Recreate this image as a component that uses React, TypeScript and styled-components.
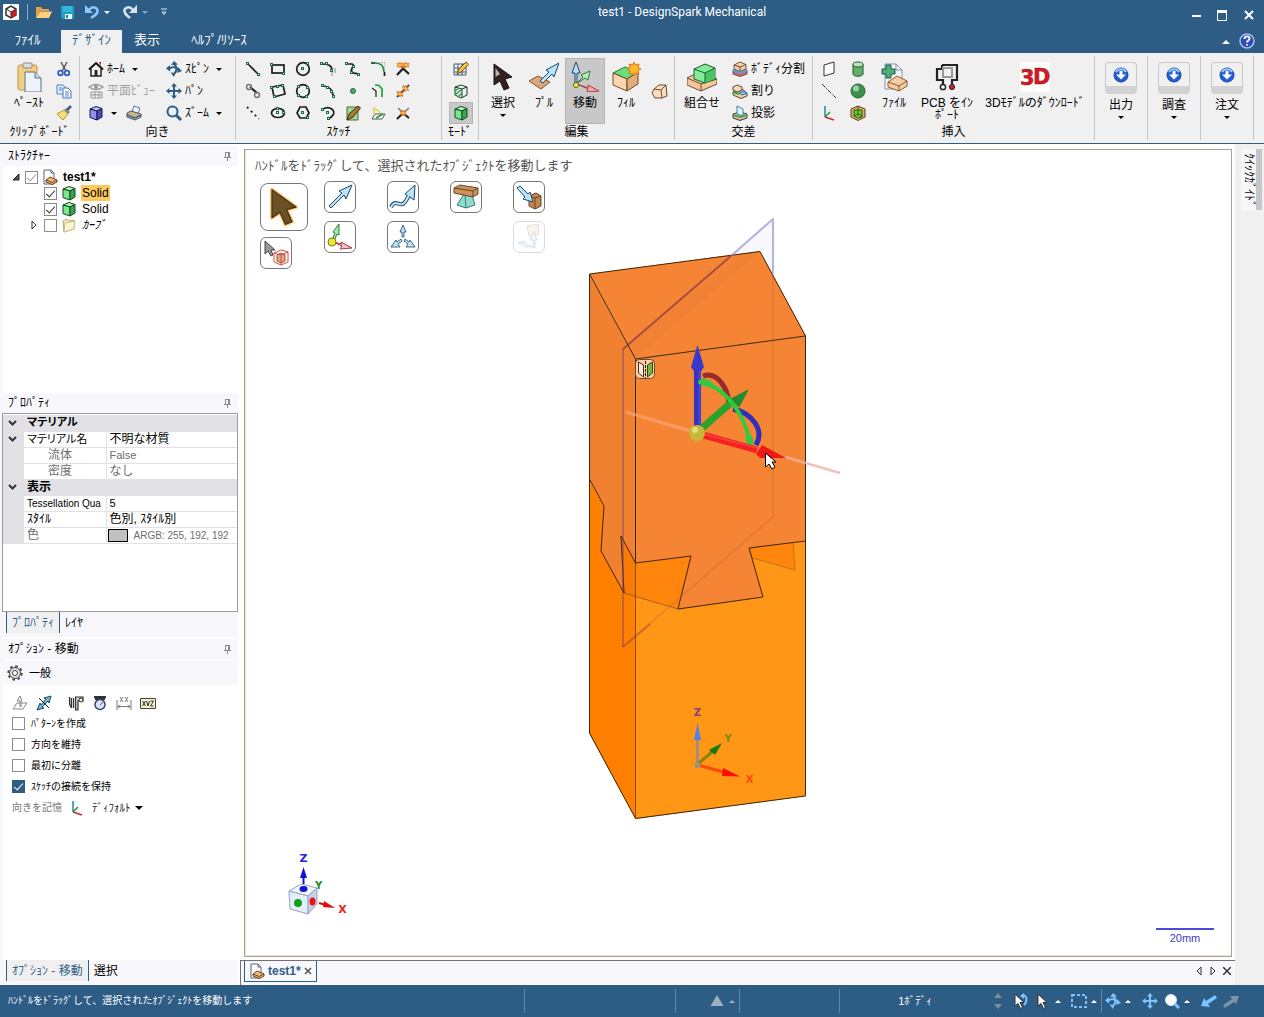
import React from "react";
import styled, { createGlobalStyle, css } from "styled-components";

const c = {
  blue: "#2d5c85",
  ribbon: "#f0f0f0",
  panel: "#f8f8fc",
  line: "#c6c6c6",
  green: "#176b45",
  ink: "#1c1c1c",
  sky: "#7cc4ff",
};

const Global = createGlobalStyle`
  * { box-sizing: border-box; }
  body {
    margin: 0;
    font-family: "Liberation Sans", "Noto Sans CJK JP", sans-serif;
    font-size: 12px;
    line-height: 16px;
    color: #000;
    background: ${c.panel};
  }
  button, select, input { font: inherit; color: inherit; margin: 0; }
  svg { display: block; flex: none; }
`;

/* ---------- frame ---------- */
const App_ = styled.div`
  min-height: 100vh;
  display: flex;
  flex-direction: column;
`;
const Plain = styled.button`
  border: 0;
  padding: 0;
  background: none;
  display: flex;
  align-items: center;
  justify-content: center;
`;
const TitleBar = styled.header`
  height: 24px;
  background: ${c.blue};
  color: #fff;
  display: flex;
  align-items: center;
  padding: 0 8px 0 3px;
`;
const Quick = styled.div`
  flex: 1;
  display: flex;
  align-items: center;
  gap: 8px;
`;
const Rule = styled.span`
  width: 1px;
  height: 16px;
  background: #93abc1;
`;
const Title = styled.h1`
  margin: 0;
  padding-left: 105px;
  font: 400 12px/16px Roboto, "Noto Sans CJK JP", sans-serif;
`;
const WindowButtons = styled.div`
  flex: 1;
  display: flex;
  justify-content: flex-end;
  gap: 12px;
  padding-top: 5px;
`;
const TabBar = styled.nav`
  height: 29px;
  padding: 6px 6px 0 0;
  background: ${c.blue};
  color: #fff;
  display: flex;
  align-items: stretch;
`;
const Tab = styled.button<{ $w: number; $on?: boolean }>`
  width: ${(p) => p.$w}px;
  border: 0;
  padding: 0 0 3px;
  font-size: 13px;
  background: ${(p) => (p.$on ? c.ribbon : "none")};
  color: ${(p) => (p.$on ? c.blue : "#fff")};
`;
const Push = styled.span`
  flex: 1;
`;

/* ---------- ribbon ---------- */
const Ribbon = styled.section`
  background: ${c.ribbon};
  border-bottom: 1px solid ${c.blue};
  display: flex;
  padding: 3px 0;
  height: 91px;
`;
const Group = styled.div<{ $w: number }>`
  width: ${(p) => p.$w}px;
  flex: none;
  border-right: 1px solid ${c.line};
  display: flex;
  flex-direction: column;
  padding-top: 2px;
`;
const GroupBody = styled.div<{ $pad?: number; $gap?: number }>`
  height: 66px;
  display: flex;
  padding-left: ${(p) => p.$pad ?? 0}px;
  gap: ${(p) => p.$gap ?? 0}px;
`;
const Caption = styled.div`
  text-align: center;
  white-space: nowrap;
  line-height: 16px;
`;
const Big = styled(Plain)<{ $w?: number; $on?: boolean }>`
  width: ${(p) => p.$w ?? 40}px;
  flex: none;
  flex-direction: column;
  justify-content: flex-start;
  padding-top: 4px;
  gap: 5px;
  line-height: 12px;
  white-space: nowrap;
  ${(p) =>
    p.$on &&
    css`
      background: #c8c8c8;
      box-shadow: inset 0 0 0 1px #b4b4b4;
    `}
`;
const Stack = styled.div`
  display: flex;
  flex-direction: column;
`;
const Row = styled(Plain)<{ $off?: boolean }>`
  height: 22px;
  justify-content: flex-start;
  gap: 3px;
  white-space: nowrap;
  color: ${(p) => (p.$off ? "#a0a0a0" : "#000")};
`;
const Pair = styled.div`
  display: flex;
  gap: 5px;
`;
const IconGrid = styled.div<{ $cols: number; $cell: number }>`
  display: grid;
  grid-template-columns: repeat(${(p) => p.$cols}, ${(p) => p.$cell}px);
  grid-auto-rows: 22px;
`;
const Cell = styled(Plain)<{ $on?: boolean }>`
  ${(p) =>
    p.$on &&
    css`
      background: #c8c8c8;
      box-shadow: inset 0 0 0 1px #b4b4b4;
    `}
`;
const Caret = styled.i<{ $up?: boolean; $color?: string; $size?: number }>`
  width: 0;
  height: 0;
  flex: none;
  margin: 0 4px;
  border: ${(p) => p.$size ?? 3}px solid transparent;
  border-${(p) => (p.$up ? "top" : "bottom")}-width: 0;
  border-${(p) => (p.$up ? "bottom" : "top")}-color: ${(p) => p.$color ?? "#000"};
`;
const DropTile = styled.span`
  width: 32px;
  height: 32px;
  border: 1px solid #c9c9c9;
  border-bottom: 8px solid #d2d2d2;
  border-radius: 4px;
  display: flex;
  justify-content: center;
  align-items: center;
`;

/* ---------- left dock ---------- */
const Work = styled.main`
  flex: 1;
  display: flex;
  background: #fff;
`;
const Dock = styled.aside`
  width: 240px;
  flex: none;
  display: flex;
  flex-direction: column;
  background: #fff;
  border-left: 3px solid ${c.panel};
  padding: 2px 2px 0 0;
`;
const Head = styled.h2`
  margin: 0;
  height: 20px;
  padding: 0 6px 0 5px;
  background: ${c.panel};
  font: inherit;
  display: flex;
  align-items: center;
  justify-content: space-between;
`;
const Tree = styled.div`
  height: 227px;
  padding-top: 3px;
`;
const Node = styled.label<{ $indent: number; $strong?: boolean; $italic?: boolean }>`
  height: 16px;
  padding-left: ${(p) => p.$indent}px;
  display: flex;
  align-items: center;
  gap: 4px;
  font-weight: ${(p) => (p.$strong ? 700 : 400)};
  font-style: ${(p) => (p.$italic ? "italic" : "normal")};
`;
const Name = styled.span<{ $hot?: boolean }>`
  padding: 0 1px;
  line-height: 16px;
  background: ${(p) => (p.$hot ? "#ffc959" : "none")};
`;
const Check = styled.input<{ $soft?: boolean; $fill?: boolean }>`
  appearance: none;
  width: 13px;
  height: 13px;
  flex: none;
  border: 1px solid #8c8c8c;
  background: #fff;
  display: flex;
  justify-content: center;
  &:checked {
    background: ${(p) => (p.$fill ? c.blue : "#fff")};
    border-color: ${(p) => (p.$fill ? c.blue : "#8c8c8c")};
  }
  &:checked::before {
    content: "";
    width: 4px;
    height: 8px;
    border: solid ${(p) => (p.$fill ? "#fff" : p.$soft ? "#a0a0a0" : "#333")};
    border-width: 0 1px 1px 0;
    transform: rotate(42deg);
  }
`;
const PropBox = styled.div`
  height: 199px;
  margin-left: -1px;
  border: 1px solid #9c9c9c;
  padding-top: 1px;
  overflow: hidden;
`;
const PropTable = styled.table`
  width: 100%;
  table-layout: fixed;
  border-collapse: collapse;
  td, th {
    height: 16px;
    padding: 0 0 0 3px;
    line-height: 15px;
    border-bottom: 1px solid #e1e1e6;
    text-align: left;
    white-space: nowrap;
    overflow: hidden;
  }
  th { font-weight: 400; border-right: 1px solid #e1e1e6; }
  td:first-child { background: #e1e1e6; }
`;
const Section = styled.tr`
  th {
    background: #e1e1e6;
    font-weight: 700;
  }
`;
const Line = styled.tr<{ $off?: boolean; $nested?: boolean }>`
  color: ${(p) => (p.$off ? "#6d6d6d" : "#000")};
  && th { padding-left: ${(p) => (p.$nested ? 24 : 3)}px; }
`;
const Wide = styled.span`
  font-size: 11px;
  font-feature-settings: "palt";
`;
const Small = styled.span`
  font-size: 11px;
`;
const Tiny = styled.span`
  font-size: 10px;
`;
const Swatch = styled.span`
  display: inline-block;
  vertical-align: top;
  width: 20px;
  height: 13px;
  margin: 1px 6px 0 -2px;
  border: 1px solid #000;
  background: #c0c0c0;
`;
const DockTabs = styled.div`
  height: 25px;
  display: flex;
  align-items: flex-start;
  background: ${c.panel};
  padding-left: 3px;
  & + ${Head} { margin-top: 2px; }
`;
const DockTab = styled.button<{ $on?: boolean }>`
  height: 21px;
  padding: 0 5px;
  border: solid ${c.blue};
  border-width: ${(p) => (p.$on ? "0 1px" : "0")};
  background: ${(p) => (p.$on ? c.ribbon : "none")};
  color: ${(p) => (p.$on ? c.blue : "#000")};
`;
const General = styled.div`
  height: 25px;
  margin-top: 1px;
  padding-left: 4px;
  background: ${c.panel};
  display: flex;
  align-items: center;
  gap: 6px;
  font-size: 11px;
`;
const Options = styled.div`
  flex: 1;
  padding: 8px 0 0 9px;
  font-size: 10px;
`;
const OptionIcons = styled.div`
  display: flex;
  height: 20px;
  align-items: center;
  gap: 16px;
`;
const IconRun = styled.div`
  display: flex;
  gap: 8px;
`;
const Option = styled.label`
  height: 21px;
  display: flex;
  align-items: center;
  gap: 6px;
`;
const Memory = styled.label`
  height: 22px;
  display: flex;
  align-items: center;
  gap: 7px;
  color: #777;
`;
const Picker = styled.span`
  display: flex;
  align-items: center;
  select {
    appearance: none;
    border: 0;
    padding: 0;
    background: none;
    color: #222;
    font-size: 11px;
  }
`;

/* ---------- canvas ---------- */
const Center = styled.div`
  flex: 1;
  min-width: 0;
  display: flex;
  flex-direction: column;
`;
const Canvas = styled.div`
  flex: 1;
  margin: 5px 3px 3px 4px;
  border: 1px solid #a7a38f;
  box-shadow: inset 1px -1px 0 #ece5cf;
  position: relative;
  min-height: 600px;
`;
const SceneSvg = styled.svg`
  position: absolute;
  inset: 0;
  width: 100%;
  height: 100%;
`;
const Hint = styled.p`
  margin: 0;
  padding: 7px 0 0 10px;
  font-size: 13px;
  line-height: 18px;
  color: #555;
`;
const Guides = styled.div`
  position: relative;
  display: flex;
  padding: 6px 0 0 15px;
  gap: 16px;
`;
const GuideCol = styled.div`
  display: flex;
  flex-direction: column;
  gap: 6px;
  padding-top: 2px;
`;
const GuideGrid = styled.div`
  display: grid;
  grid-template-columns: repeat(4, 32px);
  grid-template-rows: 32px 32px;
  gap: 8px 31px;
`;
const Guide = styled(Plain)<{ $big?: boolean; $off?: boolean; $row?: number; $col?: number }>`
  width: ${(p) => (p.$big ? 48 : 32)}px;
  height: ${(p) => (p.$big ? 48 : 32)}px;
  border: 1px solid #777;
  border-radius: ${(p) => (p.$big ? 8 : 6)}px;
  background: #fff;
  opacity: ${(p) => (p.$off ? 0.25 : 1)};
  grid-row: ${(p) => p.$row ?? "auto"};
  grid-column: ${(p) => p.$col ?? "auto"};
`;
const DocTabs = styled.div`
  height: 25px;
  background: ${c.panel};
  border-top: 1px solid #6f7078;
  border-left: 1px solid #6f7078;
  display: flex;
  align-items: flex-start;
  padding: 0 4px 0 3px;
`;
const DocTab = styled(Plain)`
  height: 21px;
  padding: 0 4px;
  gap: 3px;
  border: 1px solid ${c.blue};
  border-top: 0;
  font-weight: 700;
  color: ${c.blue};
`;
const DocNav = styled.div`
  margin-left: auto;
  height: 20px;
  display: flex;
  align-items: center;
  gap: 6px;
`;
const Rail = styled.aside`
  width: 29px;
  flex: none;
  background: #f0f0f0;
  display: flex;
  align-items: flex-start;
  justify-content: flex-end;
  padding: 5px 2px 0 0;
`;
const RailTab = styled.button`
  border: 0;
  border-right: 6px solid #c6c6c6;
  padding: 4px 0 4px 1px;
  height: 61px;
  background: ${c.panel};
  writing-mode: vertical-rl;
  text-orientation: sideways;
  line-height: 14px;
  white-space: nowrap;
`;

/* ---------- status ---------- */
const Status = styled.footer`
  height: 32px;
  background: ${c.blue};
  color: #fff;
  display: flex;
  align-items: center;
  padding-left: 8px;
  font-size: 10px;
`;
const Message = styled.span`
  flex: 1;
`;
const Slot = styled.div<{ $w: number }>`
  width: ${(p) => p.$w}px;
  height: 24px;
  flex: none;
  border-left: 1px solid #6286a6;
  display: flex;
  align-items: center;
  justify-content: flex-end;
`;
const Count = styled.span`
  width: 150px;
  text-align: center;
  font-size: 11px;
`;
const StatusTools = styled.div<{ $w: number }>`
  width: ${(p) => p.$w}px;
  display: flex;
  align-items: center;
  justify-content: space-between;
`;
const ViewTools = styled(StatusTools)`
  margin-right: 25px;
`;

/* ---------- drawings ---------- */
type IcoProps = { s?: number; v?: number; children: React.ReactNode };
const Ico = ({ s = 16, v = 16, children }: IcoProps) => (
  <svg width={s} height={s} viewBox={`0 0 ${v} ${v}`} fill="none" aria-hidden="true">
    {children}
  </svg>
);

const Cube = ({ s = 16, a, b, d, k }: { s?: number; a: string; b: string; d: string; k: string }) => (
  <Ico s={s}>
    <g stroke={k} strokeLinejoin="round">
      <path d="M2 4 8 1.500 14 3.500 9 6Z" fill={a} />
      <path d="M2 4 9 6V15L2 12.500Z" fill={b} />
      <path d="M9 6 14 3.500V12L9 15Z" fill={d} />
    </g>
  </Ico>
);
const GreenCube = ({ s = 16 }: { s?: number }) => <Cube s={s} a="#b9f5b9" b="#7be68c" d="#3fa353" k="#0c4a1e" />;

const Dots = ({ p }: { p: number[][] }) => (
  <>
    {p.map(([x, y]) => (
      <rect key={`${x}-${y}`} x={x - 0.5} y={y - 0.5} width="2" height="2" fill="#e4f7ec" stroke={c.green} />
    ))}
  </>
);
const K = { stroke: c.ink, strokeWidth: 1.7 };

const sparks = (x: number, y: number) => (
  <path
    d={`M${x} ${y - 3}l1 2 2-1-1 2 1 2-2-1-1 2-1-2-2 1 1-2-1-2 2 1Z`}
    fill="#ffc23b"
    stroke="#e0601c"
    strokeWidth=".7"
  />
);

const sketchIcons: [string, React.ReactNode][] = [
  ["線", <><path d="M3 3 13 13" {...K} /><Dots p={[[2, 2], [13, 13]]} /></>],
  ["四角形", <><rect x="2" y="4" width="12" height="8" {...K} /><Dots p={[[1, 3], [13, 12]]} /></>],
  ["円", <><circle cx="8" cy="8" r="6.300" {...K} /><Dots p={[[7, 7], [12, 2]]} /></>],
  ["接円弧", <><path d="M2 3C9 3 12 5 12 9" {...K} /><path d="M12 9v6M15 7v5" stroke="#888" /><Dots p={[[1, 2], [6, 2], [11, 9]]} /></>],
  ["スプライン", <><path d="M2 3H7C11 4 4 9 7 11 8 13 11 12 13 13" {...K} /><Dots p={[[1, 2], [8, 5], [6, 11], [13, 13]]} /></>],
  ["コーナー", <><path d="M1 2H5M14.500 11V15" {...K} /><path d="M5 2C11 2 14 5 14 11" stroke="#1e8f3e" strokeWidth="1.700" /><path d="M11 1.500h4v4" stroke="#cf9b8c" strokeDasharray="2 1" /></>],
  ["トリム", <><path d="M2 14 8 7.500 14 13" {...K} strokeWidth="2.200" /><path d="M8 7 12 3M8 7 4 3" stroke="#c0501c" strokeWidth="1.500" />{sparks(5, 4)}{sparks(11, 4)}</>],
  ["接線", <><path d="M5 4 12 10" {...K} strokeWidth="2" /><circle cx="4" cy="4" r="2.500" stroke="#777" strokeWidth="1.500" /><circle cx="12" cy="12" r="2.500" stroke="#777" strokeWidth="1.500" /></>],
  ["三点四角形", <><path d="M2 4 13 2 15 11 4 14Z" {...K} /><Dots p={[[1, 4], [12, 2], [4, 13], [7, 3]]} /></>],
  ["三点円", <><circle cx="8" cy="8" r="6.300" {...K} /><Dots p={[[3, 3], [12, 4], [3, 12], [11, 13]]} /></>],
  ["円弧", <><path d="M2 3C9 3 13 7 13 13" {...K} /><Dots p={[[2, 2], [7, 4], [11, 8], [13, 13]]} /></>],
  ["点", <circle cx="8" cy="8" r="2.500" fill="#4fae66" stroke={c.green} />],
  ["オフセット", <><path d="M2 5 6 8V14" {...K} strokeWidth="1.200" /><path d="M5 2 9 2.500 12 6V14" stroke="#1e9f3e" strokeWidth="1.700" /></>],
  ["分割", <><path d="M2 14 14 2" {...K} /><path d="M2 8 8 14M8 2 14 8" stroke="#888" />{sparks(5, 11)}{sparks(10.5, 5.5)}</>],
  ["構築線", <path d="M2 2 14 14" {...K} strokeDasharray="2 3.500" />],
  ["楕円", <><ellipse cx="8" cy="8" rx="6.500" ry="4.500" {...K} /><Dots p={[[7, 7], [7, 3], [13, 7]]} /></>],
  ["多角形", <><path d="M5 2H11L14 8 11 13H5L2 8Z" {...K} /><Dots p={[[7, 7], [12, 12]]} /></>],
  ["スイープ円弧", <><path d="M3 4C10 0 16 6 13 10 12 12 10 13 8 14" {...K} /><Dots p={[[2, 4], [7, 7], [8, 13]]} /></>],
  ["面に投影", <><path d="M2 2H13V15H2Z" fill="#a9d694" stroke="#4b6a3c" /><path d="M2 15 4 9 13 1 15.500 3 8 12Z" fill="#a47b33" stroke="#3c2a10" /></>],
  ["投影", <><path d="M2 14 5 9H15L12 14Z" fill="#fff" stroke="#555" /><path d="M6 13 13 9" stroke="#27a043" strokeWidth="2" /><path d="M4 10V3L11 8" stroke="#e3d24c" strokeWidth="1.500" /></>],
  ["交差", <><path d="M2 14 8 8 14 13" {...K} strokeWidth="2" /><path d="M3 3 8 8 14 3" stroke="#777" strokeWidth="1.500" />{sparks(8, 8)}</>],
];

const axes = (
  <>
    <path d="M4 1V12" stroke="#2a8fb2" strokeWidth="1.600" />
    <path d="M4 12 9 7" stroke="#2b9b45" strokeWidth="1.600" />
    <path d="M4 12 13 15" stroke="#bd3030" strokeWidth="1.600" />
  </>
);
const moveArrows = (color: string) => (
  <path
    d="M8 0l3 3.500H9V7h3.500V5L16 8l-3.500 3V9H9v3.500h2L8 16l-3-3.500h2V9H3.500v2L0 8l3.500-3v2H7V3.500H5Z"
    fill={color}
  />
);
const spinArrows = (color: string) => (
  <>
    <path d="M8 2.500C11 6 11 10 8 13" stroke={color} strokeWidth="2" />
    <path d="M3 8C6 5 10 6 13 9" stroke={color} strokeWidth="2" />
    <path d="M5 4 8 0 12 3.500ZM4.500 11.500 9.500 12 8 16ZM0 7.500 4 4V10.500ZM12 6 16 10 11 12Z" fill={color} />
  </>
);
const pointer = (fill: string, stroke: string) => (
  <path d="M3 1V13L6 10.500 8.500 15.500 10.500 14.500 8 9.500H12Z" fill={fill} stroke={stroke} strokeLinejoin="round" />
);
const bigPointer = "M6 2V23L12 19 16 28 21 26 17 17 24 15Z";
const Pin = () => (
  <Ico s={9} v={9}>
    <path d="M2 .5H7M2.500 0V5M6.500 0V5M5.500 0V5M1 5.500H8M4.500 5V9" stroke="#8a8a92" />
  </Ico>
);
const docIcon = (
  <>
    <path d="M2 1H9L12 4V15H2Z" fill="#fff" stroke="#56657e" />
    <path d="M9 1V4H12" stroke="#56657e" />
    <path d="M4 11 8 8 15 11V13L10 15.500 4 13Z" fill="#f0b97c" stroke="#70451f" />
    <path d="M4 11 10 13.500 15 11" stroke="#70451f" />
  </>
);
const blocks = (top: string, bottom: string) => (
  <g strokeLinejoin="round" strokeWidth=".9">
    <path d="M1 9 8 7 15 9V13L8 15.500 1 13Z" fill={bottom} stroke="#5d4637" />
    <path d="M2 4 8 1 14 3.500V8L8 10.500 2 8Z" fill={top} stroke="#5d4637" />
    <path d="M2 4 8 6 14 3.500M8 6V10" stroke="#5d4637" />
  </g>
);
const blueArrow = "#b7e4f7";
const arrowHead = "#23456a";

const DownIcon = () => (
  <Ico s={16}>
    <circle cx="8" cy="8" r="7" fill="#1d5fd8" stroke="#1440a0" />
    <path d="M3 5A6 6 0 0 1 13 5" stroke="#9cc8ff" strokeWidth="2" />
    <path d="M6.500 4h3v3.500H13L8 12.500 3 7.500h3.500Z" fill="#fff" />
  </Ico>
);

const Scene = () => (
  <SceneSvg viewBox="245 150 986 806" fill="none" role="img" aria-label="3D モデル">
    <g strokeLinejoin="round">
      <path d="M589 479V733L635 818V563Z" fill="#ff8000" />
      <path d="M635 563 806 541V796L635 819Z" fill="#ff9616" />
      <path d="M635 563 691 556 678 609 635 597Z" fill="#ff850c" />
      <path d="M621 536 635 563V597L624 593Z" fill="#f97a06" />
      <path d="M749 548 793 542 795 570 752 558Z" fill="#ff850c" stroke="#a56a18" strokeWidth=".7" />
      <path d="M589 274 760 251 806 336 635 359Z" fill="#f58535" />
      <path d="M623 349 743 253 760 251 635 359Z" fill="#ee7e36" opacity=".6" />
      <path d="M589 274 635 359V563L621 536 624 593 601 551 604 506 589 479Z" fill="#f08131" />
      <path d="M635 359 806 336V541L749 548 763 597 678 609 691 556 635 563Z" fill="#f58535" />
      <path d="M773 219V273L760 251 729 255Z" fill="#f8f8ff" />
      <path d="M624 593 678 609" stroke="#8a5a20" strokeWidth=".8" />
      <g stroke="#3d2608" strokeWidth="1">
        <path d="M589.500 274 760 251.500 805.500 336 635.500 359Z" />
        <path d="M635.500 359V563L621 536 624 593 601 551 604 506 589.500 479V274" />
        <path d="M805.500 336V541L749 548 763 597 678 609 691 556 635.500 563" />
        <path d="M589.500 479V733L635.500 818.500 805.500 796V541" />
        <path d="M635.500 563V819" stroke="#8f4a08" />
      </g>
      <path d="M623 349V647" stroke="#72367066" strokeWidth="2" />
      <path d="M623 349 731 256" stroke="#70284a99" strokeWidth="2" />
      <path d="M731 256 773 219V273" stroke="#8884c099" strokeWidth="2" />
      <path d="M773 273V517L623 647" stroke="#b0604040" strokeWidth="2" />
      <path d="M623 647 650 624" stroke="#80404066" strokeWidth="2" />
    </g>
    <path d="M626 412 697 433" stroke="#ffab83" strokeWidth="3" opacity=".6" />
    <path d="M785 457 840 473" stroke="#eab4a8" strokeWidth="2.500" opacity=".8" />
    <g>
      <path d="M703 376C717 371 728 388 729 404" stroke="#962c2c" strokeWidth="5" />
      <path d="M733 409C752 413 765 430 756 445" stroke="#3030b8" strokeWidth="5" />
      <path d="M701 429 733 401" stroke="#2ba32b" strokeWidth="7" />
      <path d="M731 399 748 390 739 407Z" fill="#238a2d" stroke="#238a2d" />
      <path d="M697.500 431V366" stroke="#3333c4" strokeWidth="7" />
      <path d="M699.500 431V370" stroke="#5050dc" strokeWidth="1.500" />
      <path d="M691 367 697.500 345 704 367 701 371H694Z" fill="#3838cd" />
      <path d="M700 382C724 386 745 413 750 444" stroke="#2ecb3b" strokeWidth="4" strokeLinecap="round" />
      <path d="M703 382 709 384M749 438 750 442" stroke="#35c843" strokeWidth="7" strokeLinecap="round" />
      <path d="M703 435 757 450" stroke="#f52020" strokeWidth="7" />
      <path d="M704 434 757 448" stroke="#ff4444" strokeWidth="1.500" />
      <path d="M756 454 762 445 786 458 760 458Z" fill="#f01818" />
      <circle cx="697" cy="433" r="8" fill="#c7b83a" />
      <circle cx="695" cy="430" r="3" fill="#e5dc7c" />
    </g>
    <path d="M765.500 453V467L769 464 772 469 775 467 772 462H776Z" fill="#fff" stroke="#000" />
    <rect x="635.500" y="359.500" width="19" height="19" rx="4" fill="#ffcda6" stroke="#6b4a28" />
    <path d="M638.500 362 643.500 365V377L638.500 373Z" fill="#ffe9d5" stroke="#403020" />
    <path d="M652.500 362 647.500 365V377L652.500 373Z" fill="#78b83b" stroke="#304018" />
    <path d="M645.500 361V378" stroke="#222" strokeDasharray="3 1" />

    <path d="M697.500 764V738" stroke="#a58b86" strokeWidth="3" />
    <path d="M694 740 697.500 723 701 740Z" fill="#5580ee" />
    <path d="M698 764 713 751" stroke="#8a8600" strokeWidth="3" />
    <path d="M709 750 722 743 715 755Z" fill="#157a08" />
    <path d="M698 765 723 772" stroke="#ff4a0c" strokeWidth="3" />
    <path d="M723 768 740 776.500 722 776Z" fill="#ff0c00" />
    <circle cx="697.500" cy="765" r="3" fill="#a09080" />
    <g fontFamily="DejaVu Sans, sans-serif" fontWeight="700" fontSize="10" textAnchor="middle">
      <text x="697.500" y="716" fill="#84476b">Z</text>
      <text x="728" y="742" fill="#7f8a08">Y</text>
      <text x="749.500" y="783" fill="#ff4a0c">X</text>
      <text x="303.500" y="862" fontSize="11" fill="#2424e0">Z</text>
      <text x="318.500" y="889" fill="#218a28">Y</text>
      <text x="342.500" y="913" fontSize="11" fill="#f02020">X</text>
    </g>
    <path d="M303.500 884V876" stroke="#1010d8" strokeWidth="2" />
    <path d="M300 878 303.500 867 307 878Z" fill="#1010d8" />
    <path d="M319 903 326 905" stroke="#d01010" strokeWidth="2" />
    <path d="M324 901 335 908 323 907Z" fill="#f00808" />
    <g stroke="#97a5bd" strokeLinejoin="round">
      <path d="M289 891 301 884 317 888 308 896Z" fill="#f0f6ff" />
      <path d="M289 891 308 896V914L290 909Z" fill="#e4eefb" />
      <path d="M308 896 317 888V904L308 914Z" fill="#c3d2ea" />
    </g>
    <ellipse cx="303.500" cy="889" rx="4" ry="3" fill="#1010d8" />
    <circle cx="298" cy="903" r="4" fill="#10a018" />
    <ellipse cx="312.500" cy="901.500" rx="3" ry="4" fill="#f01010" />
    <path d="M1156 929H1214" stroke="#4a4ae0" strokeWidth="2" />
    <text x="1185" y="942" fontFamily="Liberation Sans, sans-serif" fontSize="11" fill="#3c3ccc" textAnchor="middle">
      20mm
    </text>
  </SceneSvg>
);

const Chevron = () => (
  <Ico s={12} v={12}>
    <path d="M3 4 6.500 7.500 10 4" stroke="#333" strokeWidth="2" />
  </Ico>
);

export default function App() {
  return (
    <App_>
      <Global />
      <TitleBar>
        <Quick>
          <Ico>
            <rect width="16" height="16" rx="1" fill="#fff" />
            <path d="M3 5 8 2 13 5V11L8 14 3 11Z" fill="#fff" stroke="#333" strokeWidth="1.500" />
            <path d="M8 8 13 5V11L8 14Z" fill="#d8181f" />
            <path d="M3 5 8 8 13 5M8 8V14" stroke="#333" />
          </Ico>
          <Rule />
          <Plain aria-label="開く">
            <Ico><path d="M0 14V3H5L6.500 5H13V7H4Z" fill="#e8a23c" /><path d="M4 7.500H16L13 14H0Z" fill="#ffce80" /></Ico>
          </Plain>
          <Plain aria-label="保存">
            <Ico><path d="M1 2H14V15H3L1 13Z" fill="#1ba0c8" /><path d="M3 2H12V8H3Z" fill="#35b6d8" /><path d="M5 10H12V15H5Z" fill="#e8f8ff" /><path d="M6 11H8V14H6Z" fill="#1b80a8" /></Ico>
          </Plain>
          <Plain aria-label="元に戻す">
            <Ico><path d="M5 6C9 1 14 4 13.500 7.500 13 11 10 12 7 14" stroke="#8cc8ff" strokeWidth="2.500" /><path d="M1 1V9H9Z" fill="#8cc8ff" /></Ico>
            <Caret $color="#fff" />
          </Plain>
          <Plain aria-label="やり直し">
            <Ico><path d="M11 6C7 1 2 4 2.500 7.500 3 11 6 12 8 14" stroke="#dbe4ec" strokeWidth="2.500" /><path d="M15 1V9H7Z" fill="#dbe4ec" /></Ico>
            <Caret $color="#8fa6bb" />
          </Plain>
          <Plain aria-label="カスタマイズ">
            <Ico s={8} v={8}><path d="M1 1H7M2 4H6L4 6.500Z" stroke="#dfe8f0" /></Ico>
          </Plain>
        </Quick>
        <Title>test1 - DesignSpark Mechanical</Title>
        <WindowButtons>
          <Plain aria-label="最小化"><Ico s={14} v={14}><path d="M2 8H11" stroke="#fff" strokeWidth="2" /></Ico></Plain>
          <Plain aria-label="最大化"><Ico s={14} v={14}><path d="M1.500 3V12.500H10.500V3" stroke="#fff" /><path d="M1 3.500H11" stroke="#fff" strokeWidth="3" /></Ico></Plain>
          <Plain aria-label="閉じる"><Ico s={14} v={14}><path d="M3 3 11 11M11 3 3 11" stroke="#fff" strokeWidth="2" /></Ico></Plain>
        </WindowButtons>
      </TitleBar>
      <TabBar>
        <Tab $w={55}>ﾌｧｲﾙ</Tab>
        <Push style={{ flex: "0 0 6px" }} />
        <Tab $w={61} $on>ﾃﾞｻﾞｲﾝ</Tab>
        <Tab $w={50}>表示</Tab>
        <Tab $w={94}>ﾍﾙﾌﾟ/ﾘｿｰｽ</Tab>
        <Push />
        <Plain aria-label="リボンを隠す"><Caret $up $size={4} $color="#fff" /></Plain>
        <Plain aria-label="ヘルプ">
          <Ico s={24} v={24}>
            <circle cx="13" cy="11" r="7" fill="#2d50b8" stroke="#a9bfe8" strokeWidth="1.500" />
            <path d="M10.500 9C10.500 5.500 15.500 5.500 15.500 8.500 15.500 10.500 13 10.500 13 12.500M13 14V15.500" stroke="#fff" strokeWidth="1.800" />
          </Ico>
        </Plain>
      </TabBar>

      <Ribbon>
        <Group $w={80}>
          <GroupBody $pad={6} $gap={4}>
            <Big $w={46}>
              <Ico s={30} v={30}>
                <rect x="4" y="3" width="19" height="25" rx="2" fill="#f3cf80" stroke="#bf9548" />
                <rect x="9" y="1" width="9" height="5" rx="1" fill="#ddd" stroke="#8a8a8a" />
                <path d="M11 10H21L27 16V30H11Z" fill="#eef4fb" stroke="#60708c" />
                <path d="M21 10V16H27" fill="#c9d8ea" stroke="#60708c" />
              </Ico>
              ﾍﾟｰｽﾄ
            </Big>
            <Stack>
              <Row aria-label="切り取り"><Ico><path d="M5 1 10 10M11 1 6 10" stroke="#555" strokeWidth="1.500" /><circle cx="4.500" cy="12" r="2.300" stroke="#2d5ec0" strokeWidth="1.800" /><circle cx="11" cy="12" r="2.300" stroke="#2d5ec0" strokeWidth="1.800" /></Ico></Row>
              <Row aria-label="コピー"><Ico><path d="M1 2H7L9 4V11H1Z" fill="#e4effd" stroke="#5080c4" /><path d="M7 5H12L15 8V15H7Z" fill="#fff" stroke="#4070b8" /><path d="M9 9H13M9 11H13M9 13H13M3 5H6M3 7H6" stroke="#4c82cc" /></Ico></Row>
              <Row aria-label="書式コピー"><Ico><path d="M1 9 8 5 12 9 7 15Z" fill="#f5de7c" stroke="#b4932f" /><path d="M8 5 12 9 14 7 10 3Z" fill="#8a8a90" /><path d="M11 5 15 1" stroke="#4b5a7c" strokeWidth="2.500" /></Ico></Row>
            </Stack>
          </GroupBody>
          <Caption>ｸﾘｯﾌﾟﾎﾞｰﾄﾞ</Caption>
        </Group>

        <Group $w={156}>
          <GroupBody $pad={8} $gap={11}>
            <Stack>
              <Row><Ico><path d="M3 8V15H13V8" fill="#fff8c8" stroke="#222" strokeWidth="1.500" /><path d="M1 8.500 8 2 15 8.500" stroke="#111" strokeWidth="2" /><path d="M6.500 9H9.500V15H6.500Z" fill="#1b2463" /><path d="M11 1H13V5" fill="#b02020" /></Ico>ﾎｰﾑ<Caret /></Row>
              <Row $off disabled><Ico><path d="M1 4Q8-1 15 4Q8 9 1 4Z" stroke="#999" strokeWidth="1.500" /><circle cx="8" cy="4" r="2" fill="#999" /><path d="M3 9H14V15H3ZM3 12H14M7 9V15M11 9V15" stroke="#999" /></Ico>平面ﾋﾞｭｰ</Row>
              <Pair>
                <Row aria-label="ビュー"><Cube a="#c4c4fb" b="#9090e8" d="#4a4ab8" k="#181850" /><Caret /></Row>
                <Row aria-label="印刷"><Ico><path d="M6 7 8 1 14 3 12 9Z" fill="#e8f4ff" stroke="#4c7cc0" /><path d="M1 8 5 6 15 9V12L9 15 1 12Z" fill="#d7b27c" stroke="#555" /><path d="M1 10 9 13 15 10" stroke="#2870b0" strokeWidth="1.500" /></Ico></Row>
              </Pair>
            </Stack>
            <Stack>
              <Row><Ico>{spinArrows(c.blue)}</Ico>ｽﾋﾟﾝ<Caret /></Row>
              <Row><Ico>{moveArrows(c.blue)}</Ico>ﾊﾟﾝ</Row>
              <Row><Ico><circle cx="6.500" cy="6.500" r="5" fill="#e8f2fb" stroke={c.blue} strokeWidth="2" /><path d="M10 10 15 15" stroke={c.blue} strokeWidth="3" /></Ico>ｽﾞｰﾑ<Caret /></Row>
            </Stack>
          </GroupBody>
          <Caption>向き</Caption>
        </Group>

        <Group $w={206}>
          <GroupBody $pad={4}>
            <IconGrid $cols={7} $cell={25}>
              {sketchIcons.map(([name, art]) => (
                <Cell key={name} aria-label={name}><Ico>{art}</Ico></Cell>
              ))}
            </IconGrid>
          </GroupBody>
          <Caption>ｽｹｯﾁ</Caption>
        </Group>

        <Group $w={37}>
          <GroupBody $pad={7}>
            <IconGrid $cols={1} $cell={24}>
              <Cell aria-label="スケッチモード"><Ico><path d="M1 3H13V14H1ZM5 3V14M9 3V14M1 7H13M1 11H13" stroke="#4a5a78" /><path d="M4 13 6 8 13 1 15.500 3.500 8 11Z" fill="#f2c73c" stroke="#6d4c14" /></Ico></Cell>
              <Cell aria-label="断面モード"><Ico><path d="M2 4 8 2 14 4V12L8 15 2 12ZM2 4 9 6 14 4M9 6V15" stroke="#173f22" /><path d="M2 8 6 5M2 12 9 6M5 14 9 10" stroke="#2d9a48" strokeWidth="1.500" /></Ico></Cell>
              <Cell $on aria-label="3D モード"><GreenCube /></Cell>
            </IconGrid>
          </GroupBody>
          <Caption>ﾓｰﾄﾞ</Caption>
        </Group>

        <Group $w={196}>
          <GroupBody $pad={4} $gap={1}>
            <Big>
              <Ico s={30} v={30}><path d={bigPointer} fill="#33221e" stroke="#1c1210" strokeLinejoin="round" /><path d="M7.500 6V15L12 12Z" fill="#b8b4b2" /></Ico>
              選択
              <Caret />
            </Big>
            <Big>
              <Ico s={30} v={30}>
                <path d="M0 19 9 14 21 20 12 27Z" fill="#dda877" stroke="#80532c" />
                <path d="M11 19 20 10 17 8 30 1 25 15 23 12 14 21Z" fill={blueArrow} stroke={arrowHead} />
              </Ico>
              ﾌﾟﾙ
            </Big>
            <Big $on>
              <Ico s={30} v={30}>
                <path d="M5 22V11H2L6 0 10 11H7V22Z" fill={blueArrow} stroke={arrowHead} />
                <path d="M6 22 13 15 11 13 20 9 18 18 15 16Z" fill="#b2efb8" stroke="#2c7b3c" />
                <path d="M7 22 18 26 18 23 29 29 17 30 18 27Z" fill="#f2aaaa" stroke="#a83c44" />
                <circle cx="6" cy="23" r="2.500" fill="#f2e84c" stroke="#6c6420" />
              </Ico>
              移動
            </Big>
            <Big>
              <Ico s={30} v={30}>
                <path d="M2 11 14 5 27 10 16 17Z" fill="#6fdc7c" stroke="#287038" />
                <path d="M2 11 16 17V29L2 23Z" fill="#fbd5ae" stroke="#6e4a2c" />
                <path d="M16 17 27 10V22L16 29Z" fill="#e5ab78" stroke="#6e4a2c" />
                <path d="M23 0 24.500 3 28 2 27 5.500 30 7 27 8.500 28 12 24.500 11 23 14 21.500 11 18 12 19 8.500 16 7 19 5.500 18 2 21.500 3Z" fill="#ffb52c" stroke="#d97812" />
              </Ico>
              ﾌｨﾙ
            </Big>
            <Cell aria-label="ブレンド"><Ico s={26} v={26}><path d="M7 11 12 7H19L20 18 15 20H8L5 15Z" fill="#fbdcbf" stroke="#6e4a2c" /><path d="M7 11 14 12 19 7M14 12 15 20" stroke="#6e4a2c" /></Ico></Cell>
          </GroupBody>
          <Caption>編集</Caption>
        </Group>

        <Group $w={138}>
          <GroupBody $pad={7} $gap={10}>
            <Big>
              <Ico s={30} v={30}>
                <path d="M0 16 8 12 30 17V22L14 29 0 23Z" fill="#f5c79a" stroke="#6e4a2c" />
                <path d="M0 16 14 22 30 17M14 22V29" stroke="#6e4a2c" />
                <path d="M7 7 18 2 28 6V17L18 21 7 17Z" fill="#84ec98" stroke="#146030" />
                <path d="M18 11 28 6V17L18 21Z" fill="#4cc464" />
                <path d="M7 7 18 11 28 6M18 11V21" stroke="#146030" />
              </Ico>
              組合せ
            </Big>
            <Stack>
              <Row><Ico>{blocks("#f6d0a8", "#d2636b")}<path d="M1 9 8 12 15 9" stroke="#5c9fe0" strokeWidth="2" /></Ico>ﾎﾞﾃﾞｨ分割</Row>
              <Row><Ico><g strokeLinejoin="round"><path d="M1 9 10 6 15 10V13L9 15.500 1 12Z" fill="#f3cb9e" stroke="#5d4637" /><path d="M1 4 5 2 10 4V7L5 9 1 7Z" fill="#f6d8b4" stroke="#5d4637" /><path d="M1 9 7 11" stroke="#2ca83c" strokeWidth="2" /><path d="M7 10 12 8 15 10 10 12Z" fill="#8ac4ee" stroke="#3070a8" /></g></Ico>割り</Row>
              <Row><Ico><g strokeLinejoin="round"><path d="M1 9 8 7 15 9V13L8 15.500 1 13Z" fill="#e2b98c" stroke="#40385c" /><path d="M5 9V1L11 4V11Z" fill="#dff2ff" stroke="#3c7cb4" /><path d="M1 10 8 12 15 10" stroke="#2ca83c" strokeWidth="1.500" /></g></Ico>投影</Row>
            </Stack>
          </GroupBody>
          <Caption>交差</Caption>
        </Group>

        <Group $w={282}>
          <GroupBody $pad={1}>
            <IconGrid $cols={2} $cell={29}>
              <Cell aria-label="平面"><Ico><path d="M3 4 13 1V12L3 15Z" fill="#fff" stroke="#333" /></Ico></Cell>
              <Cell aria-label="円柱"><Ico><path d="M3 3V13C3 16 13 16 13 13V3Z" fill="#62b06c" stroke="#22592c" /><ellipse cx="8" cy="3.500" rx="5" ry="2.500" fill="#b9e5bd" stroke="#22592c" /></Ico></Cell>
              <Cell aria-label="軸"><Ico><path d="M1 1 15 15" stroke="#333" strokeDasharray="5 1 1 1" /></Ico></Cell>
              <Cell aria-label="球"><Ico><circle cx="8" cy="8" r="7" fill="#3f8f4c" stroke="#28632f" /><circle cx="6" cy="5.500" r="3" fill="#9bd4a0" /></Ico></Cell>
              <Cell aria-label="原点"><Ico>{axes}</Ico></Cell>
              <Cell aria-label="シェル"><Ico><path d="M1 4 8 1 15 4V12L8 15.500 1 12Z" fill="#d9ae6c" stroke="#5a3c14" /><path d="M4 5 12 5V12L8 13 4 11Z" fill="#6cc830" stroke="#285a10" /><path d="M8 2V9L4 11M8 9 12 11" stroke="#285a10" /></Ico></Cell>
            </IconGrid>
            <Big $w={44}>
              <Ico s={30} v={30}>
                <path d="M6 2H17L23 8V27H6Z" fill="#f2f6fa" stroke="#8494a8" />
                <path d="M17 2V8H23" stroke="#8494a8" />
                <path d="M7 3H12V7H16V12H12V16H7V12H3V7H7Z" fill="#4fae7c" stroke="#1c5d40" />
                <path d="M9 20 18 14 28 19V24L20 29 9 25Z" fill="#f6cda0" stroke="#8a5a30" />
                <path d="M9 20 20 24 28 19M20 24V29" stroke="#8a5a30" />
              </Ico>
              ﾌｧｲﾙ
            </Big>
            <Big $w={62}>
              <Ico s={30} v={30}>
                <path d="M10 3H25V18H20V23M10 3V7H5V18H11V23" stroke="#222" strokeWidth="2.200" />
                <rect x="11" y="6" width="9" height="9" stroke="#999" strokeWidth="2" />
                <circle cx="11" cy="25" r="2.600" fill="#fff" stroke="#222" strokeWidth="1.500" />
                <circle cx="20" cy="25" r="2.600" fill="#d4202c" stroke="#222" />
              </Ico>
              <span>PCB をｲﾝ<br />ﾎﾟｰﾄ</span>
            </Big>
            <Big $w={114}>
              <Ico s={30} v={30}>
                <rect width="30" height="30" rx="3" fill="#fff" />
                <g fontFamily="DejaVu Sans, sans-serif" fontSize="21" fontWeight="700" stroke="#a0141c" strokeWidth=".5">
                  <text x="0" y="23" fill="#d01c26">3</text>
                  <text x="13" y="22" fill="#d01c26">D</text>
                </g>
              </Ico>
              3Dﾓﾃﾞﾙのﾀﾞｳﾝﾛｰﾄﾞ
            </Big>
          </GroupBody>
          <Caption>挿入</Caption>
        </Group>

        {["出力", "調査", "注文"].map((name) => (
          <Group key={name} $w={53}>
            <Big $w={52}>
              <DropTile><DownIcon /></DropTile>
              {name}
              <Caret />
            </Big>
          </Group>
        ))}
      </Ribbon>

      <Work>
        <Dock>
          <Head>ｽﾄﾗｸﾁｬｰ<Pin /></Head>
          <Tree>
            <Node $indent={8} $strong>
              <Ico s={10} v={10}><path d="M2 8H8V2Z" fill="#555" stroke="#222" /></Ico>
              <Check type="checkbox" defaultChecked $soft />
              <Ico>{docIcon}</Ico>
              <Name>test1*</Name>
            </Node>
            <Node $indent={41}>
              <Check type="checkbox" defaultChecked />
              <GreenCube />
              <Name $hot>Solid</Name>
            </Node>
            <Node $indent={41}>
              <Check type="checkbox" defaultChecked />
              <GreenCube />
              <Name>Solid</Name>
            </Node>
            <Node $indent={27} $italic>
              <Ico s={10} v={10}><path d="M2 1V9L6 5Z" stroke="#333" /></Ico>
              <Check type="checkbox" />
              <Ico><path d="M2 4 6 2 8 4 13 3V12L3 15Z" fill="#f5e9b8" stroke="#b9a873" /><path d="M4 6 14 4 13 12 3 15Z" fill="#fdf5d2" stroke="#c9b983" /></Ico>
              <Name>ｶｰﾌﾞ</Name>
            </Node>
          </Tree>

          <Head>ﾌﾟﾛﾊﾟﾃｨ<Pin /></Head>
          <PropBox>
            <PropTable>
              <colgroup><col style={{ width: 21 }} /><col style={{ width: 82 }} /><col /></colgroup>
              <tbody>
                <Section><td><Chevron /></td><th colSpan={2}><Wide>マテリアル</Wide></th></Section>
                <Line><td><Chevron /></td><th><Wide>マテリアル名</Wide></th><td>不明な材質</td></Line>
                <Line $off $nested><td /><th>流体</th><td><Small>False</Small></td></Line>
                <Line $off $nested><td /><th>密度</th><td>なし</td></Line>
                <Section><td><Chevron /></td><th colSpan={2}>表示</th></Section>
                <Line><td /><th><Tiny>Tessellation Qua</Tiny></th><td><Small>5</Small></td></Line>
                <Line><td /><th>ｽﾀｲﾙ</th><td>色別, ｽﾀｲﾙ別</td></Line>
                <Line $off><td /><th>色</th><td><Swatch /><Tiny>ARGB: 255, 192, 192</Tiny></td></Line>
              </tbody>
            </PropTable>
          </PropBox>
          <DockTabs>
            <DockTab $on>ﾌﾟﾛﾊﾟﾃｨ</DockTab>
            <DockTab>ﾚｲﾔ</DockTab>
          </DockTabs>

          <Head>ｵﾌﾟｼｮﾝ - 移動<Pin /></Head>
          <General>
            <Ico>
              <circle cx="8" cy="8" r="6.800" stroke="#444" strokeWidth="1.800" strokeDasharray="2.600 2.740" />
              <circle cx="8" cy="8" r="5.500" fill="#ddd" stroke="#444" />
              <circle cx="8" cy="8" r="2.500" fill="#fff" stroke="#444" />
            </Ico>
            一般
          </General>
          <Options>
            <OptionIcons>
              <IconRun>
                <Plain aria-label="方向"><Ico><path d="M1 14 5 8 15 8 11 14Z" stroke="#888" /><path d="M8 12V6H5L8 1 10 6H9V12" fill="#eee" stroke="#888" /></Ico></Plain>
                <Plain aria-label="両側"><Ico><path d="M1 15 4 8 5 10 10 4 8 3 15 1 13 8 12 6 6 12 8 13Z" fill="#72b6dc" stroke="#204868" /><path d="M3 3 13 13" stroke="#222" /></Ico></Plain>
              </IconRun>
              <IconRun>
                <Plain aria-label="ノギス"><Ico><path d="M1.500 2V9L3.500 13V3M5.500 3V13M7.500 15V2H15V6H10V15Z" fill="#ccc" stroke="#333" strokeWidth="1.200" /><circle cx="13" cy="5" r="2" fill="#eee" stroke="#333" /></Ico></Plain>
                <Plain aria-label="秤"><Ico><path d="M2 2H14M3 4H13" stroke="#333" strokeWidth="2" /><circle cx="8" cy="9.500" r="5" fill="#d9e6f8" stroke="#33427c" strokeWidth="1.500" /><path d="M8 10 11 7" stroke="#c03030" /></Ico></Plain>
                <Plain aria-label="寸法"><Ico><path d="M1 5V15M15 5V15M2 11.500H14M4 9.500 2 11.500 4 13.500M12 9.500 14 11.500 12 13.500M4 2 7 7M7 2 4 7M9 2 12 7M12 2 9 7" stroke="#777" /></Ico></Plain>
                <Plain aria-label="座標"><Ico><path d="M.5 3.500H15.500V13.500H.5Z" fill="#f4f1cc" stroke="#444" /><path d="M2.500 6 5.500 11M5.500 6 2.500 11M6.500 6 8 11 9.500 6M10.500 6H13.500L10.500 11H13.500" stroke="#333" /></Ico></Plain>
              </IconRun>
            </OptionIcons>
            <Option><Check type="checkbox" $fill />ﾊﾟﾀｰﾝを作成</Option>
            <Option><Check type="checkbox" $fill />方向を維持</Option>
            <Option><Check type="checkbox" $fill />最初に分離</Option>
            <Option><Check type="checkbox" $fill defaultChecked />ｽｹｯﾁの接続を保持</Option>
            <Memory>
              向きを記憶
              <Ico>{axes}</Ico>
              <Picker>
                <select defaultValue="d"><option value="d">ﾃﾞｨﾌｫﾙﾄ</option></select>
                <Caret $size={4} />
              </Picker>
            </Memory>
          </Options>
          <DockTabs>
            <DockTab $on>ｵﾌﾟｼｮﾝ - 移動</DockTab>
            <DockTab>選択</DockTab>
          </DockTabs>
        </Dock>

        <Center>
          <Canvas>
            <Scene />
            <Hint>ﾊﾝﾄﾞﾙをﾄﾞﾗｯｸﾞして、選択されたｵﾌﾞｼﾞｪｸﾄを移動します</Hint>
            <Guides>
              <GuideCol>
                <Guide $big aria-label="選択">
                  <Ico s={40} v={30}>
                    <g strokeLinejoin="round">
                      <path d={bigPointer} stroke="#ffc980" strokeWidth="3" />
                      <path d={bigPointer} fill="#6b5026" stroke="#4a3414" />
                    </g>
                  </Ico>
                </Guide>
                <Guide aria-label="コンポーネント選択">
                  <Ico s={26} v={26}>
                    <path d="M2 1V14L5 11 8 16 10 15 8 10H12Z" fill="#999" stroke="#444" />
                    <path d="M11 13 18 10 25 12V22L18 25 11 22Z" fill="#fff" stroke="#e04444" />
                    <path d="M14 15 18 13 22 15V21L18 23 14 21Z" fill="#dba983" stroke="#93572c" />
                    <path d="M11 13 18 15 25 12M18 15V25" stroke="#e04444" />
                  </Ico>
                </Guide>
              </GuideCol>
              <GuideGrid>
                <Guide $row={1} $col={1} aria-label="移動方向"><Ico s={28} v={28}><path d="M3 23 16 10 13 8 26 2 20 16 18 12 5 25Z" fill={blueArrow} stroke={arrowHead} /></Ico></Guide>
                <Guide $row={1} $col={2} aria-label="軌跡に沿って移動">
                  <Ico s={28} v={28}>
                    <path d="M2 24C6 16 10 23 14 21 17 19 18 16 20 12" stroke={arrowHead} strokeWidth="4" />
                    <path d="M16 11 26 2 25 17 21 14Z" fill={blueArrow} stroke={arrowHead} />
                    <path d="M2 24C6 16 10 23 14 21 17 19 18 16 20 12" stroke={blueArrow} strokeWidth="2" />
                  </Ico>
                </Guide>
                <Guide $row={1} $col={3} aria-label="支点"><Ico s={28} v={28}><path d="M12 11 20 12 23 22 14 25 5 22Z" fill="#8edbd0" stroke="#3a7c78" /><path d="M13 11 14 25" stroke="#3a7c78" /><path d="M2 5 8 2 26 5V11L21 14 2 10Z" fill="#c9925f" stroke="#6a431e" /><path d="M2 5 21 8 26 5M21 8V14" stroke="#6a431e" /></Ico></Guide>
                <Guide $row={1} $col={4} aria-label="まで"><Ico s={28} v={28}><path d="M14 13 21 10 26 13V23L20 26 14 23Z" fill="#c08752" stroke="#6a431e" /><path d="M14 13 20 15 26 13M20 15V26" stroke="#6a431e" /><path d="M2 5 5 3 13 11 15 9 18 19 8 16 10 14Z" fill={blueArrow} stroke={arrowHead} /></Ico></Guide>
                <Guide $row={2} $col={1} aria-label="アンカー"><Ico s={28} v={28}><path d="M6 17 9 10 7 9 13 1 13 12 11 11 8 18Z" fill="#9deba8" stroke="#2c7b3c" /><path d="M7 19 16 21 15 19 26 25 14 26 16 23Z" fill="#f4c0c0" stroke="#a83c44" /><circle cx="6" cy="19" r="4" fill="#f0e830" stroke="#807820" /></Ico></Guide>
                <Guide $row={2} $col={2} aria-label="放射移動"><Ico s={28} v={28}><g fill={blueArrow} stroke={arrowHead} strokeWidth=".8"><path d="M13 14V9H11L14 2 17 9H15V14Z" /><path d="M12 16 8 19 7 17 2 24 11 24 9 21 13 18Z" /><path d="M16 16 20 19 21 17 26 24 17 24 19 21 15 18Z" /></g></Ico></Guide>
                <Guide $row={2} $col={4} $off disabled aria-label="方向付け"><Ico s={28} v={28}><path d="M12 3 23 1 24 11 14 13Z" fill="#e8d2b8" stroke="#a08060" /><path d="M18 25V17H15L19 8 22 17H20V25Z" fill={blueArrow} stroke="#6b90ad" /><path d="M3 20 10 18 9 20 18 24 10 24 8 22Z" fill={blueArrow} stroke="#6b90ad" /></Ico></Guide>
              </GuideGrid>
            </Guides>
          </Canvas>
          <DocTabs>
            <DocTab><Ico>{docIcon}</Ico>test1*<Ico s={8} v={8}><path d="M1 1 7 7M7 1 1 7" stroke="#555" strokeWidth="1.500" /></Ico></DocTab>
            <DocNav>
              <Plain aria-label="前へ"><Ico s={8} v={8}><path d="M6 0V8L2 4Z" stroke="#333" /></Ico></Plain>
              <Plain aria-label="次へ"><Ico s={8} v={8}><path d="M2 0V8L6 4Z" stroke="#333" /></Ico></Plain>
              <Plain aria-label="閉じる"><Ico s={8} v={8}><path d="M0 0 8 8M8 0 0 8" stroke="#333" strokeWidth="1.500" /></Ico></Plain>
            </DocNav>
          </DocTabs>
        </Center>
        <Rail><RailTab>ｸｲｯｸｶﾞｲﾄﾞ</RailTab></Rail>
      </Work>

      <Status>
        <Message>ﾊﾝﾄﾞﾙをﾄﾞﾗｯｸﾞして、選択されたｵﾌﾞｼﾞｪｸﾄを移動します</Message>
        <Slot $w={151} />
        <Slot $w={64}>
          <Ico><path d="M8 2 14.500 13H1.500Z" fill="#9fb0bf" /></Ico>
          <Caret $up $color="#9fb0bf" />
        </Slot>
        <Slot $w={100} />
        <Slot $w={262}>
          <Count>1ﾎﾞﾃﾞｨ</Count>
          <StatusTools $w={111}>
            <Ico><path d="M8 0 12 5H4ZM8 16 12 11H4Z" fill="#7d8d9a" /></Ico>
            <Plain aria-label="選択を戻す"><Ico>{pointer("#fff", "#333")}<path d="M10 2C15 2 16 8 12 12" stroke={c.sky} strokeWidth="2" /><path d="M8 3 12 0V6Z" fill={c.sky} /></Ico></Plain>
            <Plain aria-label="選択ツール"><Ico>{pointer("#fff", "#333")}</Ico><Caret $up $color="#fff" /></Plain>
            <Plain aria-label="範囲選択"><Ico><rect x="1" y="2" width="14" height="12" stroke={c.sky} strokeWidth="2" strokeDasharray="3 2" /></Ico><Caret $up $color="#fff" /></Plain>
          </StatusTools>
        </Slot>
        <Slot $w={163}>
          <ViewTools $w={134}>
            <Plain aria-label="スピン"><Ico>{spinArrows(c.sky)}</Ico><Caret $up $color="#fff" /></Plain>
            <Plain aria-label="パン"><Ico>{moveArrows(c.sky)}</Ico></Plain>
            <Plain aria-label="ズーム"><Ico><circle cx="7" cy="7" r="5.500" fill="#fff" stroke="#cfe8ff" /><path d="M11 11 15 15" stroke={c.sky} strokeWidth="3" /></Ico><Caret $up $color="#fff" /></Plain>
            <Plain aria-label="前のビュー"><Ico><path d="M0 13 3 5 5 8 14 2 16 5 7 11 9 14Z" fill={c.sky} /></Ico></Plain>
            <Plain aria-label="次のビュー"><Ico><path d="M16 3 13 11 11 9 2 15 0 12 9 6 7 3Z" fill="#7d93a6" /></Ico></Plain>
          </ViewTools>
        </Slot>
      </Status>
    </App_>
  );
}
